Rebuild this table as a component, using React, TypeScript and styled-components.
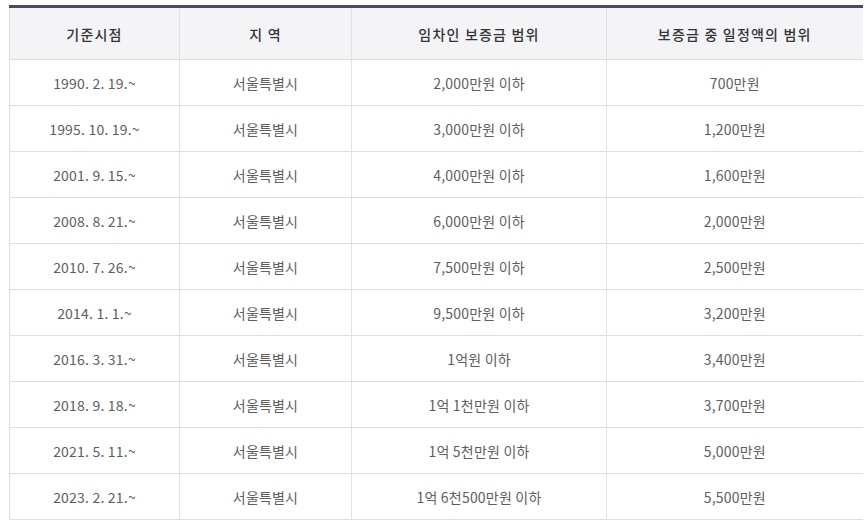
import React from 'react';
import styled, { createGlobalStyle } from 'styled-components';

const GlobalStyle = createGlobalStyle`
    html, body {
        margin: 0;
        padding: 0;
        background: #ffffff;
    }
    body {
        font-family: "Noto Sans CJK KR", "Noto Sans", sans-serif;
    }
`;

const Wrapper = styled.div`
    padding: 5px 3px 0 9px;
`;

const Table = styled.table`
    width: 853px;
    border-collapse: collapse;
    table-layout: fixed;
    border-top: 3px solid #4b4c5b;
    border-left: 1px solid #dedede;
`;

const HeadCell = styled.th`
    height: 51px;
    padding: 0;
    background: #f4f4f7;
    color: #333333;
    font-size: 14px;
    font-weight: 500;
    letter-spacing: 1.2px;
    text-align: center;
    border-bottom: 1px solid #dcdcdc;
    border-right: 1px solid #e2e2e2;
    &:last-child { border-right: none; }
`;

const Cell = styled.td`
    height: 45px;
    padding: 0;
    color: #5e5e5e;
    font-size: 14px;
    text-align: center;
    letter-spacing: 0.2px;
    border-bottom: 1px solid #dedede;
    border-right: 1px solid #e2e2e2;
    &:last-child { border-right: none; }
`;

interface Row {
    date: string;
    region: string;
    range: string;
    amount: string;
}

const rows: Row[] = [
    { date: '1990. 2. 19.~', region: '서울특별시', range: '2,000만원 이하', amount: '700만원' },
    { date: '1995. 10. 19.~', region: '서울특별시', range: '3,000만원 이하', amount: '1,200만원' },
    { date: '2001. 9. 15.~', region: '서울특별시', range: '4,000만원 이하', amount: '1,600만원' },
    { date: '2008. 8. 21.~', region: '서울특별시', range: '6,000만원 이하', amount: '2,000만원' },
    { date: '2010. 7. 26.~', region: '서울특별시', range: '7,500만원 이하', amount: '2,500만원' },
    { date: '2014. 1. 1.~', region: '서울특별시', range: '9,500만원 이하', amount: '3,200만원' },
    { date: '2016. 3. 31.~', region: '서울특별시', range: '1억원 이하', amount: '3,400만원' },
    { date: '2018. 9. 18.~', region: '서울특별시', range: '1억 1천만원 이하', amount: '3,700만원' },
    { date: '2021. 5. 11.~', region: '서울특별시', range: '1억 5천만원 이하', amount: '5,000만원' },
    { date: '2023. 2. 21.~', region: '서울특별시', range: '1억 6천500만원 이하', amount: '5,500만원' },
];

function App() {
    return (
        <>
            <GlobalStyle />
            <Wrapper>
                <Table>
                    <colgroup>
                        <col style={{ width: 170 }} />
                        <col style={{ width: 172 }} />
                        <col style={{ width: 255 }} />
                        <col style={{ width: 256 }} />
                    </colgroup>
                    <thead>
                        <tr>
                            <HeadCell>기준시점</HeadCell>
                            <HeadCell>지 역</HeadCell>
                            <HeadCell>임차인 보증금 범위</HeadCell>
                            <HeadCell>보증금 중 일정액의 범위</HeadCell>
                        </tr>
                    </thead>
                    <tbody>
                        { rows.map((row) => (
                            <tr key={row.date}>
                                <Cell>{row.date}</Cell>
                                <Cell>{row.region}</Cell>
                                <Cell>{row.range}</Cell>
                                <Cell>{row.amount}</Cell>
                            </tr>
                        )) }
                    </tbody>
                </Table>
            </Wrapper>
        </>
    );
}

export default App;
